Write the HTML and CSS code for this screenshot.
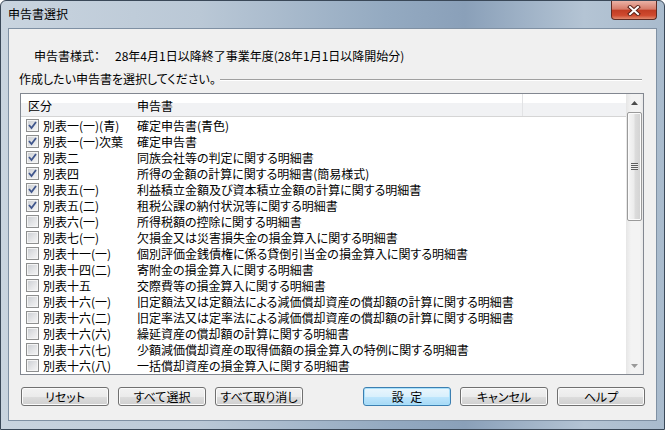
FILE: index.html
```html
<!DOCTYPE html>
<html lang="ja">
<head>
    <meta charset="UTF-8">
    <title>申告書選択</title>
    <link rel="stylesheet" href="styles.css">
</head>
<body>

<div class="window">
    <div class="titlebar">
        <span class="title">申告書選択</span>
        <div class="close">
            <svg width="14" height="11" viewBox="0 0 14 11">
                <path d="M3 2 L11 9 M11 2 L3 9" stroke="#5a2118" stroke-width="4" stroke-linecap="square"/>
                <path d="M3 2 L11 9 M11 2 L3 9" stroke="#ffffff" stroke-width="2" stroke-linecap="square"/>
            </svg>
        </div>
    </div>

    <div class="client">
        <div class="spec-row">
            <span class="spec-label">申告書様式：</span>
            <span>28年4月1日以降終了事業年度(28年1月1日以降開始分)</span>
        </div>

        <div class="group-head">
            <span>作成したい申告書を選択してください。</span>
            <span class="rule"></span>
        </div>

        <div class="listbox">
            <div class="list-main">
                <div class="list-header">
                    <div class="col-kubun">区分</div>
                    <div class="col-name">申告書</div>
                </div>
                <div class="rows">
                    <div class="row"><div class="cell-kubun"><span class="cb"><svg width="11" height="11"><path d="M2 5 L4.5 8 L9 2" stroke="#40568c" stroke-width="1.8" fill="none"/></svg></span>別表一(一)(青)</div><div class="cell-name">確定申告書(青色)</div></div>
                    <div class="row"><div class="cell-kubun"><span class="cb"><svg width="11" height="11"><path d="M2 5 L4.5 8 L9 2" stroke="#40568c" stroke-width="1.8" fill="none"/></svg></span>別表一(一)次葉</div><div class="cell-name">確定申告書</div></div>
                    <div class="row"><div class="cell-kubun"><span class="cb"><svg width="11" height="11"><path d="M2 5 L4.5 8 L9 2" stroke="#40568c" stroke-width="1.8" fill="none"/></svg></span>別表二</div><div class="cell-name">同族会社等の判定に関する明細書</div></div>
                    <div class="row"><div class="cell-kubun"><span class="cb"><svg width="11" height="11"><path d="M2 5 L4.5 8 L9 2" stroke="#40568c" stroke-width="1.8" fill="none"/></svg></span>別表四</div><div class="cell-name">所得の金額の計算に関する明細書(簡易様式)</div></div>
                    <div class="row"><div class="cell-kubun"><span class="cb"><svg width="11" height="11"><path d="M2 5 L4.5 8 L9 2" stroke="#40568c" stroke-width="1.8" fill="none"/></svg></span>別表五(一)</div><div class="cell-name">利益積立金額及び資本積立金額の計算に関する明細書</div></div>
                    <div class="row"><div class="cell-kubun"><span class="cb"><svg width="11" height="11"><path d="M2 5 L4.5 8 L9 2" stroke="#40568c" stroke-width="1.8" fill="none"/></svg></span>別表五(二)</div><div class="cell-name">租税公課の納付状況等に関する明細書</div></div>
                    <div class="row"><div class="cell-kubun"><span class="cb"></span>別表六(一)</div><div class="cell-name">所得税額の控除に関する明細書</div></div>
                    <div class="row"><div class="cell-kubun"><span class="cb"></span>別表七(一)</div><div class="cell-name">欠損金又は災害損失金の損金算入に関する明細書</div></div>
                    <div class="row"><div class="cell-kubun"><span class="cb"></span>別表十一(一)</div><div class="cell-name">個別評価金銭債権に係る貸倒引当金の損金算入に関する明細書</div></div>
                    <div class="row"><div class="cell-kubun"><span class="cb"></span>別表十四(二)</div><div class="cell-name">寄附金の損金算入に関する明細書</div></div>
                    <div class="row"><div class="cell-kubun"><span class="cb"></span>別表十五</div><div class="cell-name">交際費等の損金算入に関する明細書</div></div>
                    <div class="row"><div class="cell-kubun"><span class="cb"></span>別表十六(一)</div><div class="cell-name">旧定額法又は定額法による減価償却資産の償却額の計算に関する明細書</div></div>
                    <div class="row"><div class="cell-kubun"><span class="cb"></span>別表十六(二)</div><div class="cell-name">旧定率法又は定率法による減価償却資産の償却額の計算に関する明細書</div></div>
                    <div class="row"><div class="cell-kubun"><span class="cb"></span>別表十六(六)</div><div class="cell-name">繰延資産の償却額の計算に関する明細書</div></div>
                    <div class="row"><div class="cell-kubun"><span class="cb"></span>別表十六(七)</div><div class="cell-name">少額減価償却資産の取得価額の損金算入の特例に関する明細書</div></div>
                    <div class="row"><div class="cell-kubun"><span class="cb"></span>別表十六(八)</div><div class="cell-name">一括償却資産の損金算入に関する明細書</div></div>
                </div>
            </div>
            <div class="scrollbar">
                <div class="sb-arrow"><svg width="7" height="4"><path d="M0 4 L3.5 0 L7 4 Z" fill="#4d4d4d"/></svg></div>
                <div class="sb-thumb"><span class="grip"></span></div>
                <div class="sb-track"></div>
                <div class="sb-arrow"><svg width="7" height="4"><path d="M0 0 L3.5 4 L7 0 Z" fill="#9a9a9a"/></svg></div>
            </div>
        </div>

        <div class="buttons">
            <button class="btn">リセット</button>
            <button class="btn">すべて選択</button>
            <button class="btn">すべて取り消し</button>
            <button class="btn primary wide">設 定</button>
            <button class="btn">キャンセル</button>
            <button class="btn">ヘルプ</button>
        </div>
    </div>
</div>

</body>
</html>
```

FILE: styles.css
```css
body {
    margin: 0;
    font-family: "Noto Sans CJK JP", sans-serif;
    font-size: 12px;
    font-feature-settings: "palt";
    color: #000;
    background: #fff;
}
.window {
    width: 665px;
    height: 430px;
    box-sizing: border-box;
    border: 1px solid #3a4858;
    border-radius: 6px 6px 0 0;
    padding: 0 7px 8px 7px;
    display: flex;
    flex-direction: column;
    background: linear-gradient(to right, #c9d4df 0%, #bac8d6 30%, #94aac1 58%, #8aa0b9 70%, #b4c4d4 88%, #a9bbcd 100%);
}
.titlebar {
    height: 27px;
    display: flex;
    align-items: flex-start;
}
.title {
    line-height: 25px;
}
.close {
    margin-left: auto;
    width: 46px;
    height: 19px;
    box-sizing: border-box;
    border: 1px solid #5e2b23;
    border-top: none;
    border-radius: 0 0 4px 4px;
    display: flex;
    align-items: center;
    justify-content: center;
    background: linear-gradient(#eab2a6 0%, #d67b69 45%, #c13d24 52%, #cf4a2f 80%, #e08a6f 100%);
}
.client {
    flex: 1;
    background: #f0f0f0;
    border: 1px solid #7f90a3;
    display: flex;
    flex-direction: column;
}
.spec-row {
    margin: 19px 0 0 25px;
    line-height: 16px;
    display: flex;
}
.spec-label {
    width: 81px;
}
.group-head {
    margin: 7px 14px 0 10px;
    line-height: 16px;
    display: flex;
    align-items: center;
    gap: 4px;
}
.rule {
    flex: 1;
    border-top: 1px solid #a0a0a0;
    border-bottom: 1px solid #ffffff;
    margin-top: 2px;
}
.listbox {
    margin: 6px 12px 0 11px;
    height: 282px;
    box-sizing: border-box;
    border: 1px solid #828790;
    background: #fff;
    display: flex;
}
.list-main {
    flex: 1;
    display: flex;
    flex-direction: column;
    overflow: hidden;
}
.list-header {
    height: 23px;
    flex: none;
    box-sizing: border-box;
    display: flex;
    align-items: center;
    border-bottom: 1px solid #d5d5d5;
    background: linear-gradient(#ffffff 0%, #ffffff 42%, #f1f2f4 43%, #f1f2f4 100%);
}
.col-kubun {
    width: 110px;
    box-sizing: border-box;
    padding-left: 7px;
}
.col-name {
    width: 392px;
    height: 100%;
    box-sizing: border-box;
    padding-left: 6px;
    display: flex;
    align-items: center;
    border-right: 1px solid #e2e3e5;
}
.row {
    height: 16px;
    display: flex;
    align-items: center;
    white-space: nowrap;
}
.cell-kubun {
    width: 110px;
    box-sizing: border-box;
    padding-left: 5px;
    display: flex;
    align-items: center;
}
.cell-name {
    padding-left: 6px;
}
.cb {
    width: 13px;
    height: 13px;
    box-sizing: border-box;
    margin-right: 4px;
    border: 1px solid #8e8f8f;
    box-shadow: inset 0 0 0 1px #f4f4f4;
    background: linear-gradient(135deg, #c9ccd1 0%, #e4e5e7 55%, #f6f6f6 100%);
    display: flex;
}
.cb svg {
    display: block;
}
.scrollbar {
    width: 17px;
    flex: none;
    display: flex;
    flex-direction: column;
    background: linear-gradient(to right, #e6e6e6, #f3f3f3 30%, #f3f3f3 80%, #e9e9e9);
}
.sb-arrow {
    height: 17px;
    display: flex;
    align-items: center;
    justify-content: center;
}
.sb-thumb {
    height: 109px;
    margin: 1px 1px 0 1px;
    box-sizing: border-box;
    border: 1px solid #9a9a9a;
    border-radius: 2px;
    display: flex;
    align-items: center;
    justify-content: center;
    background: linear-gradient(to right, #f6f6f6 0%, #ececec 45%, #dcdcdc 55%, #d2d2d2 100%);
    box-shadow: inset 0 0 0 1px #fbfbfb;
}
.grip {
    width: 7px;
    height: 7px;
    background: repeating-linear-gradient(#5e5e5e 0, #5e5e5e 1px, #eeeeee 1px, #eeeeee 2px);
}
.sb-track {
    flex: 1;
}
.buttons {
    margin: 12px 0 0 12px;
    display: flex;
    gap: 9px;
}
.btn {
    width: 88px;
    height: 19px;
    box-sizing: border-box;
    padding: 0;
    font-family: inherit;
    font-size: 12px;
    font-feature-settings: "palt";
    line-height: 15px;
    color: #000;
    border: 1px solid #707070;
    border-radius: 3px;
    box-shadow: inset 0 0 0 1px #fbfbfb;
    background: linear-gradient(#f2f2f2 0%, #ebebeb 50%, #dddddd 51%, #cfcfcf 100%);
}
.btn.primary {
    margin-left: 51px;
    border-color: #3c7fb1;
    box-shadow: inset 0 0 0 1px #a8e0fb;
    background: linear-gradient(#eaf6fd 0%, #d9f0fc 50%, #bee6fd 51%, #a7d9f5 100%);
}
.btn.wide {
    word-spacing: 4px;
}
```
